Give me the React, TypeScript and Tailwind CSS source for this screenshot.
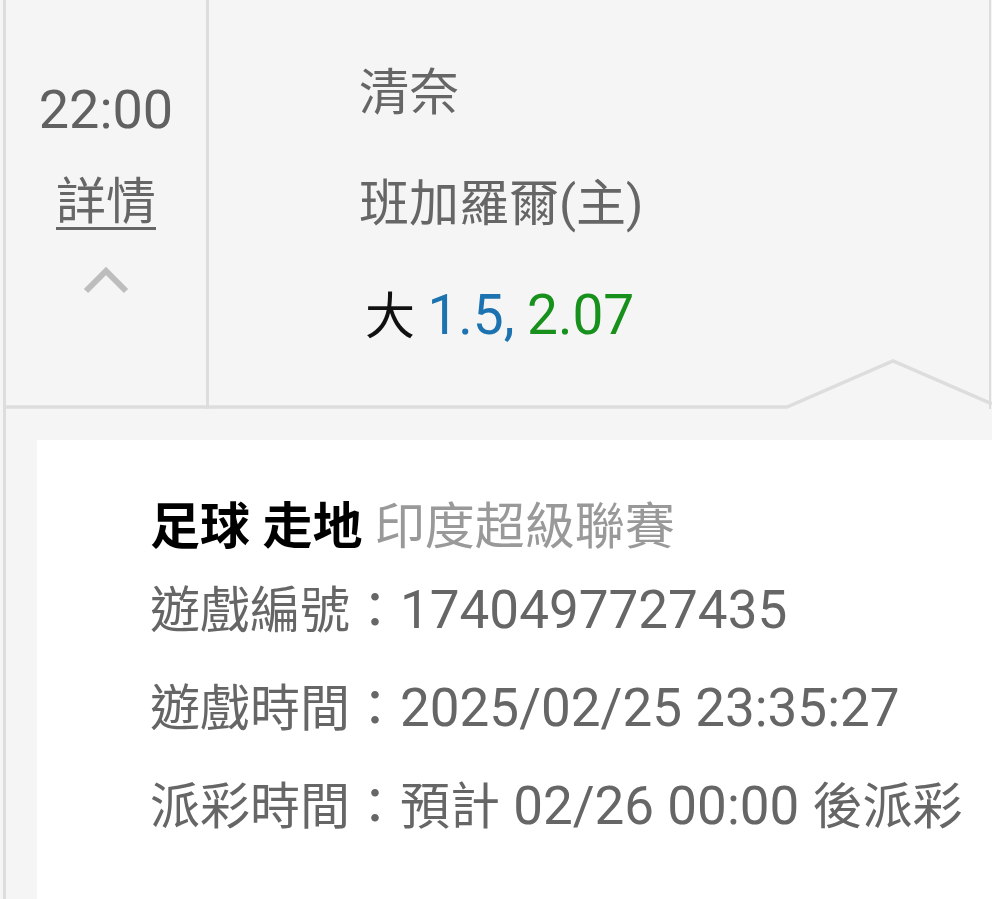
const FONT = "font-['Roboto','Noto_Sans_CJK_TC',sans-serif]";

function Chevron() {
  return (
    <svg width="46" height="28" viewBox="0 0 46 28" fill="none">
      <polyline points="3,25 23,5 43,25" stroke="#bdbdbd" strokeWidth="6" strokeLinejoin="miter" />
    </svg>
  );
}

const DETAILS = [
  { label: "遊戲編號：", value: <span className="text-[53px]">1740497727435</span> },
  { label: "遊戲時間：", value: <span className="text-[53px]">2025/02/25 23:35:27</span> },
  {
    label: "派彩時間：",
    value: (
      <>
        預計<span className="text-[53px]"> 02/26 00:00 </span>後派彩
      </>
    ),
  },
];

export default function App() {
  return (
    <div className={`h-[899px] w-[992px] overflow-hidden bg-[#f5f5f5] pl-[3px] ${FONT}`}>
      <div className="flex h-full flex-col border-l-[3px] border-[#dddddd]">
        <div className="relative flex h-[409px] shrink-0">
          <div className="flex w-[203px] shrink-0 flex-col items-center border-r-[3px] border-[#dddddd] pt-[80px]">
            <div className="h-[60px] text-[54px] leading-[60px] text-[#616161]">22:00</div>
            <div className="mt-[32px] h-[60px] text-[50px] leading-[60px] text-[#666666] underline decoration-[3px] underline-offset-[8px]">
              詳情
            </div>
            <div className="mt-[34px]">
              <Chevron />
            </div>
          </div>

          <div className="mr-px flex-1 border-r-2 border-[#dddddd] pl-[150px] pt-[38px] text-[50px] text-[#666666]">
            <div className="h-[111px] leading-[111px]">清奈</div>
            <div className="h-[111px] leading-[111px]">班加羅爾(主)</div>
            <div className="h-[111px] pl-[6px] leading-[111px]">
              <span className="text-[#111111]">大</span>{" "}
              <span className="text-[55px] text-[#1d72b0]">1.5,</span>{" "}
              <span className="text-[55px] text-[#17901c]">2.07</span>
            </div>
          </div>

          <svg
            className="pointer-events-none absolute bottom-0 left-0"
            width="986"
            height="50"
            viewBox="0 0 986 50"
            fill="none"
          >
            <polyline points="0,48 781,48 887,2 986,45" stroke="#dddddd" strokeWidth="3.5" />
          </svg>
        </div>

        <div className="ml-[31px] mt-[31px] flex-1 bg-white pl-[113px] pt-[53px] text-[50px]">
          <div className="h-[68px] leading-[68px]">
            <span className="font-bold text-black">足球 走地</span>{" "}
            <span className="text-[#999999]">印度超級聯賽</span>
          </div>
          {DETAILS.map((row) => (
            <div key={row.label} className="h-[98px] whitespace-nowrap leading-[98px] text-[#666666]">
              {row.label}
              {row.value}
            </div>
          ))}
        </div>
      </div>
    </div>
  );
}
